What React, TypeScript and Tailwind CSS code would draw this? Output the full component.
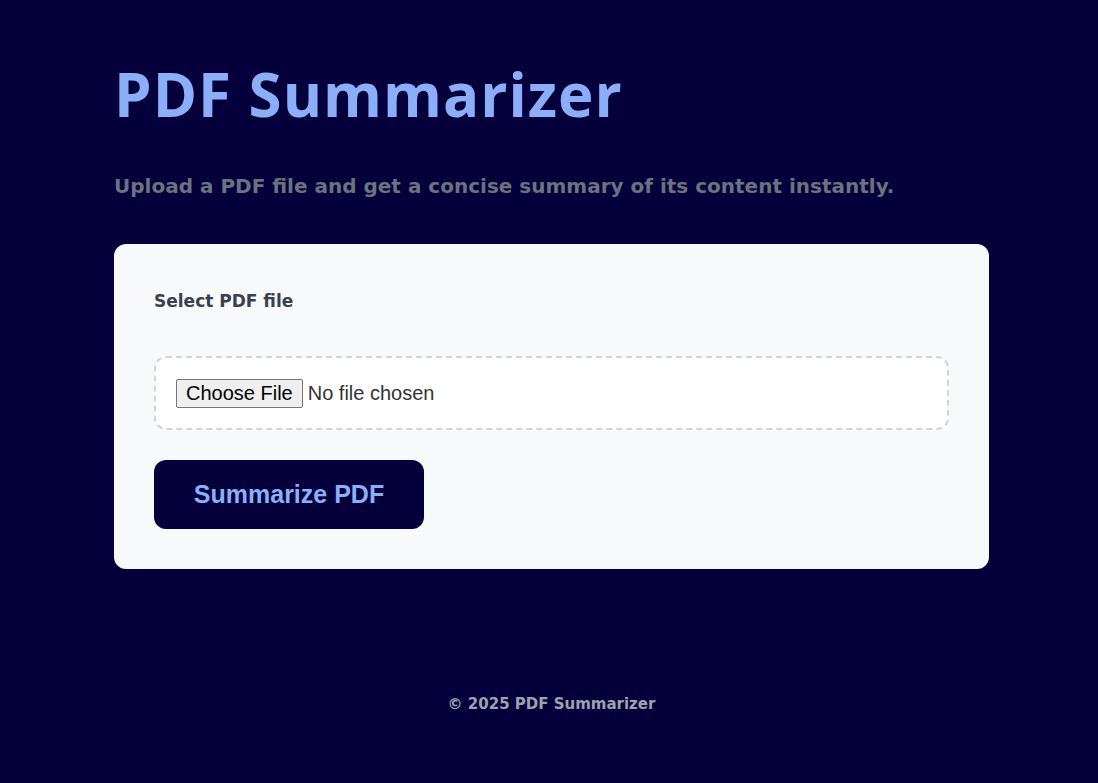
import React from "react";

const poppinsLike = '"DejaVu Sans", "Open Sans", sans-serif';

export default function App() {
  return (
    <div className="min-h-[783px] w-full bg-[#05003b]" style={{ fontFamily: poppinsLike }}>
      <div className="ml-[114px] w-[875px] pt-[62px]">
        <h1
          className="text-[60px] font-bold leading-[64px] tracking-[1px] text-[#8aaef8]"
          style={{ fontFamily: '"Open Sans", sans-serif' }}
        >
          PDF Summarizer
        </h1>
        <p className="mt-[45px] text-[20px] font-bold leading-[30px] text-[#6b7280]">
          Upload a PDF file and get a concise summary of its content instantly.
        </p>
        <div className="mt-[43px] rounded-[12px] bg-[#f8f9fb] p-[40px]">
          <label className="block pt-[3px] text-[17px] font-bold leading-[28px] text-[#374151]">Select PDF file</label>
          <div className="mt-[41px] flex h-[74px] items-center rounded-[12px] border-2 border-dashed border-[#d1d5db] bg-white px-[20px]">
            <input
              type="file"
              accept="application/pdf"
              className="text-[20px] leading-[23px] text-[#333333] file:mr-[5px] file:rounded-[2px] file:border file:border-solid file:border-[#767676] file:bg-[#efefef] file:px-[9px] file:py-[2px] file:text-[20px] file:leading-[23px] file:text-black"
              style={{ fontFamily: '"Liberation Sans", Arial, sans-serif' }}
            />
          </div>
          <button
            className="mt-[30px] block h-[69px] w-[270px] rounded-[12px] bg-[#05003b] text-[25px] font-bold text-[#8ab0f8]"
            style={{ fontFamily: '"Liberation Sans", Arial, sans-serif' }}
          >
            Summarize PDF
          </button>
        </div>
        <footer className="mt-[124px] text-center text-[15px] font-bold text-[#9ca3af]">© 2025 PDF Summarizer</footer>
      </div>
    </div>
  );
}
